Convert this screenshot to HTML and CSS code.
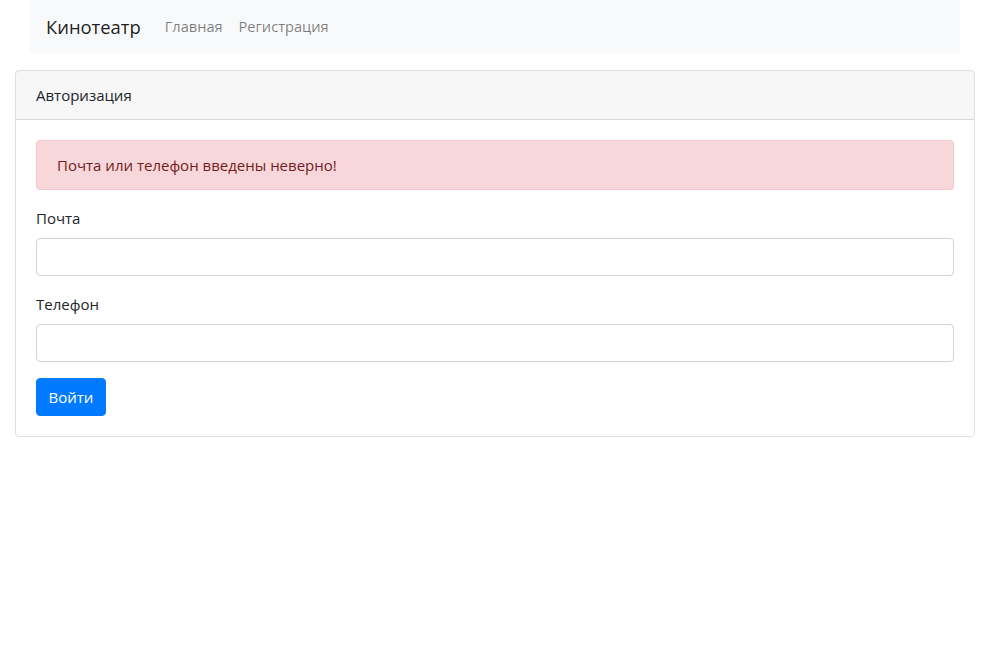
FILE: index.html
```html
<!DOCTYPE html>
<html lang="ru">
<head>
<meta charset="utf-8">
<title>Авторизация</title>
<link rel="stylesheet" href="styles.css">
</head>
<body>
<nav class="navbar">
  <a class="brand" href="#">Кинотеатр</a>
  <ul class="nav">
    <li><a href="#">Главная</a></li>
    <li><a href="#">Регистрация</a></li>
  </ul>
</nav>
<div class="card">
  <div class="card-header">Авторизация</div>
  <div class="card-body">
    <div class="alert">Почта или телефон введены неверно!</div>
    <form>
      <div class="form-group">
        <label for="email">Почта</label>
        <input id="email" class="form-control" type="text">
      </div>
      <div class="form-group">
        <label for="phone">Телефон</label>
        <input id="phone" class="form-control" type="text">
      </div>
      <button type="button" class="btn">Войти</button>
    </form>
  </div>
</div>
</body>
</html>
```
FILE: styles.css
```css
* { box-sizing: border-box; }
html, body { margin: 0; padding: 0; }
body {
  font-family: "Open Sans", "Noto Sans", sans-serif;
  font-size: 15px;
  color: #212529;
  background: #fff;
  line-height: 1.5;
}
.navbar {
  width: 930px;
  height: 53px;
  margin-left: 30px;
  background: #f8f9fa;
  display: flex;
  align-items: center;
  padding: 0 16px;
}
.brand {
  font-size: 18.4px;
  color: rgba(0,0,0,.9);
  text-decoration: none;
  margin-right: 24px;
}
.nav {
  list-style: none;
  display: flex;
  margin: 0;
  padding: 0;
  gap: 16px;
  font-size: 14.6px;
}
.nav a {
  color: rgba(0,0,0,.5);
  text-decoration: none;
}
.card {
  width: 960px;
  margin: 17px 0 0 15px;
  border: 1px solid rgba(0,0,0,.125);
  border-radius: 4px;
}
.card-header {
  background: rgba(0,0,0,.03);
  border-bottom: 1px solid rgba(0,0,0,.125);
  height: 49px;
  padding: 0 20px;
  display: flex;
  align-items: center;
}
.card-body { padding: 20px; }
.alert {
  background: #f8d7da;
  border: 1px solid #f5c6cb;
  color: #721c24;
  border-radius: 4px;
  height: 50px;
  padding: 0 20px;
  display: flex;
  align-items: center;
  margin-bottom: 16px;
}
.form-group { margin-bottom: 16px; }
label {
  display: block;
  height: 24px;
  line-height: 24px;
  margin-bottom: 8px;
}
.form-control {
  display: block;
  width: 100%;
  height: 38px;
  border: 1px solid #ced4da;
  border-radius: 4px;
  padding: 6px 12px;
  font: inherit;
}
.btn {
  background: #007bff;
  border: 1px solid #007bff;
  color: #fff;
  font: inherit;
  height: 38px;
  width: 70px;
  border-radius: 4px;
  padding: 0;
}
```
